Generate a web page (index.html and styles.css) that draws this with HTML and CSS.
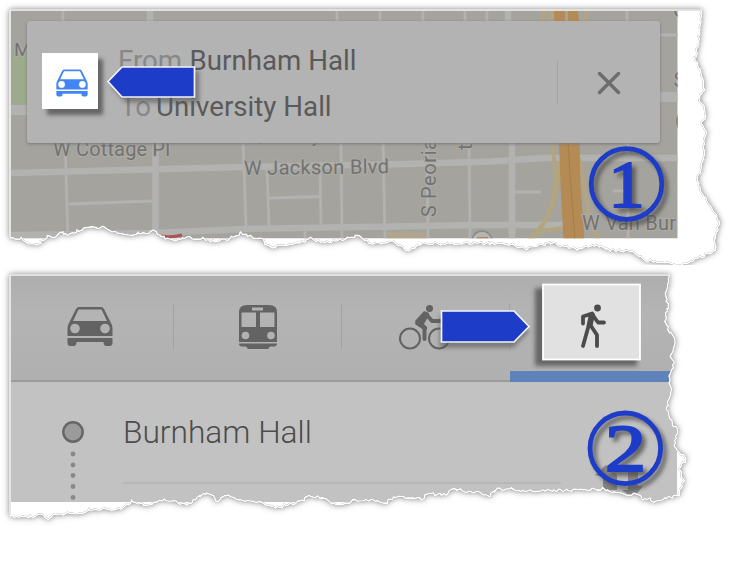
FILE: index.html
```html
<!DOCTYPE html>
<html lang="en">
<head>
<meta charset="utf-8">
<title>Directions guide</title>
<link rel="stylesheet" href="styles.css">
</head>
<body>
<main class="guide">
  <section class="panel panel-map">
    <svg class="backdrop" viewBox="0 0 751 265">
      <defs>
        <clipPath id="clip1"><path data-tear="first"/></clipPath>
        <clipPath id="mapArea"><rect x="11" y="11" width="666.5" height="227.3"/></clipPath>
        <filter id="soft" x="-5%" y="-5%" width="110%" height="115%"><feGaussianBlur stdDeviation="3"/></filter>
      </defs>
      <path class="paper-shadow" data-tear="first"/>
      <path class="paper" data-tear="first"/>
      <g clip-path="url(#clip1)"><g clip-path="url(#mapArea)">
        <rect class="land" width="751" height="265"/>
        <rect class="park" x="10" y="50" width="18" height="54"/>
        <path class="zone" d="M387 232h39v8h-39z"/>
        <g class="road">
          <path d="M63 10v20M65 140l3 100M243 140l3 86M267 168l2 58M320 168l1 58M341 140l1 100M383 140l2 100M427 140l1 100M469 140l1 100M337 10v20M380 10v20M423 10v20M465 10v20M487 10v20M627 10v20M305 231v9M628 143v97M69 204l83-3M269 198l51-1.5M515 192h26M613 191h13M660 35h20"/>
          <path class="major" d="M150 10v20M155.500 140v100M508 10v20M512 140v100M10 173l233-6 147-2.500 100-3L545 158h135M10 235l145-2 90-4 235-4h84"/>
          <path class="wide" d="M10 110h18M658 97h22"/>
        </g>
        <g class="ramp"><path d="M552 140c4 30 5 46-2 70-6 18-16 22-21 30M558 163c0 38-10 61-28 77M579 158c7 24 5 55 19 81M535 232l28-4M544 10l-2 11M552 10l-2 11M587 10l-2 11"/></g>
        <path class="highway" d="M559 140h20.500l1 45 4 55h-21l-3-55zM554 10h11v11h-11zM568 10h10l1 11h-11z"/>
        <path class="median" d="M568 143l3 45 4 52"/>
        <path class="rail" d="M162 236q8 2 20-1"/>
        <circle class="stop" cx="482" cy="241" r="10"/><path class="stop-mark" d="M477 238h11"/>
        <g class="label">
          <text x="14" y="56" font-size="19">M</text>
          <text x="53" y="156" textLength="117">W Cottage Pl</text>
          <text x="244" y="175" textLength="145" transform="rotate(-.7 244 175)">W Jackson Blvd</text>
          <text transform="translate(436 217) rotate(-90)" textLength="78">S Peoria</text>
          <text x="249" y="142" textLength="72">Quincy</text>
          <text transform="translate(472 150) rotate(-90)">t</text>
          <text x="582" y="230" textLength="94">W Van Bur</text>
          <text x="673" y="17">C</text><text x="673.500" y="87">S</text><text x="675" y="129">C</text>
        </g>
      </g></g>
      <path class="paper-edge" data-tear="first"/>
    </svg>

    <div class="route-card">
      <div class="route-mode">
        <svg viewBox="0 0 46 39" class="car car-blue"><use href="#car"/></svg>
      </div>
      <div class="route-lines">
        <div class="line"><span class="muted">From</span><span class="place">Burnham Hall</span></div>
        <div class="line"><span class="muted to">To</span><span class="place">University Hall</span></div>
      </div>
      <div class="route-close"><svg viewBox="0 0 24 24"><path d="M2.500 2.500l19 19M21.500 2.500l-19 19"/></svg></div>
    </div>

    <svg class="overlay" viewBox="0 0 751 265">
      <path class="arrow arrow-left" d="M108 81.500L122 67h72.500v30H122z"/>
      <g class="number">
        <circle cx="626.500" cy="184" r="35.300"/>
        <text x="608.500" y="207" textLength="36" lengthAdjust="spacingAndGlyphs">1</text>
      </g>
    </svg>
  </section>

  <section class="panel panel-modes">
    <svg class="backdrop" viewBox="0 265 751 306">
      <defs><clipPath id="clip2"><path data-tear="second"/></clipPath></defs>
      <path class="paper-shadow" data-tear="second"/>
      <path class="paper" data-tear="second"/>
    </svg>

    <div class="sheet">
      <div class="tabs">
        <div class="tab tab-car"><svg viewBox="0 0 46 39" class="car"><g id="car">
          <path d="M9 2Q10 0 12 0h22q2 0 3 2l7.500 15q1 2 1 4v8H.5v-8q0-2 1-4zM11.500 2.500L6 14h34l-5.500-11.500z" fill-rule="evenodd"/>
          <path d="M.5 31h45v5q0 3-3 3h-3q-3 0-3-4H9.500q0 4-3 4h-3q-3 0-3-3z"/>
          <circle class="lamp" cx="8" cy="21.500" r="4.800"/><circle class="lamp" cx="38" cy="21.500" r="4.800"/></g></svg></div>
        <div class="tab tab-train"><svg viewBox="0 0 40 44" class="train">
          <path fill-rule="evenodd" d="M1 7Q1 0 9 0h22q8 0 8 7v30H1zM14 2.500v3h11v-3zM3.500 7.500V22H18V7.500zM22 7.500V22h14.500V7.500z"/>
          <path d="M1 38.500h38q0 3-3 3h-4l-2 2.500H10l-2-2.500H4q-3 0-3-3z"/>
          <circle class="lamp" cx="7.500" cy="30.500" r="3.800"/><circle class="lamp" cx="33" cy="30.500" r="3.800"/></svg></div>
        <div class="tab tab-bike"><svg viewBox="0 0 50 45" class="bike">
          <circle class="wheel" cx="11" cy="33.500" r="10"/><circle class="wheel" cx="40" cy="33.500" r="10"/>
          <circle cx="30.500" cy="3.500" r="3.500"/>
          <path class="limb" d="M26 9l-8 9 7.500 5v11M27 9l6 7h10" /><path d="M16 16l9-10 5 2-1 4-4 7 3 3v3l-5-2z"/></svg></div>
        <div class="tab tab-walk"></div>
      </div>
      <div class="stops">
        <svg class="origin" viewBox="0 0 26 84"><circle class="pin" cx="13" cy="13" r="9.700"/><g><circle cx="13" cy="35" r="2.400"/><circle cx="13" cy="46" r="2.400"/><circle cx="13" cy="56.500" r="2.400"/><circle cx="13" cy="67.500" r="2.400"/><circle cx="13" cy="78.500" r="2.400"/></g></svg>
        <div class="stop-name"><span>Burnham Hall</span></div>
      </div>
    </div>

    <svg class="overlay" viewBox="0 265 751 306">
      <path class="ghost" clip-path="url(#clip2)" d="M595 475l11-10 11 10v15h-14v-13zM628 469h10v17h5l-10 12-11-8h6z"/>
      <path class="paper-edge" data-tear="second"/>
      <rect class="spot-shadow" x="535" y="288" width="102" height="78"/>
      <path class="arrow arrow-right" d="M441.500 311h72.500l15 15.500L514 342h-72.500z"/>
      <rect class="spot" x="543" y="284.500" width="97" height="75"/>
      <g class="walker">
        <circle cx="597.500" cy="308" r="3.400"/>
        <path d="M592 313.500l-9 3v7M592 314l6 8.500h6M591 314l-3 14-5 18M591 326l6 9v11"/>
        <path class="torso" d="M592 315l-2 10"/>
      </g>
      <g class="number">
        <circle cx="625.300" cy="448.300" r="35.300"/>
        <text x="605" y="471" textLength="41" lengthAdjust="spacingAndGlyphs">2</text>
      </g>
    </svg>
  </section>
</main>
<script src="script.js"></script>
</body>
</html>
```

FILE: styles.css
```css
* { box-sizing: border-box; }
body { margin: 0; background: #fff; font-family: Roboto, "Liberation Sans", sans-serif; overflow: hidden; }
.guide { display: grid; grid-template-rows: 265px 306px; width: 751px; }
.panel { display: grid; position: relative; overflow: hidden; }
.panel > * { grid-area: 1 / 1; }
.backdrop, .overlay { display: block; width: 100%; height: 100%; overflow: hidden; }
.overlay { position: absolute; inset: 0; }

.paper { fill: #fff; }
.paper-shadow { fill: #777; stroke: #777; stroke-width: 1; filter: url(#soft); }
.paper-edge { fill: none; stroke: #fff; stroke-width: 1.6; filter: drop-shadow(0 0 .6px #666); }
.land { fill: #a5a39e; }
.park { fill: #9eaa8d; }
.zone { fill: #b2a58d; }
.road { fill: none; stroke: #b2b2b1; stroke-width: 2.8; }
.road .major { stroke-width: 6.5; }
.road .wide { stroke-width: 10; }
.ramp { fill: none; stroke: #b3a57f; stroke-width: 4; }
.highway { fill: #b58b55; }
.median { fill: none; stroke: #a77f4b; stroke-width: 1.2; }
.rail { fill: none; stroke: #ad5555; stroke-width: 3; }
.stop { fill: #b5b5b3; stroke: #898986; stroke-width: 1.5; }
.stop-mark { stroke: #b7835c; stroke-width: 2; }
.label { font-size: 20px; fill: #737270; paint-order: stroke; stroke: #adaca8; stroke-width: 2px; }

.route-card {
  display: grid; grid-template-columns: 91px 439px 103px;
  width: 633px; height: 122px; margin: 21px 0 0 27px;
  background: #b3b3b3; border-radius: 3px; box-shadow: 0 1px 3px #777;
}
.route-mode {
  display: grid; place-items: center; width: 56px; height: 56px; margin: 32px 0 0 15px;
  background: #fff; box-shadow: 5px 6px 4px #666;
}
.car { width: 46px; height: 39px; fill: #636363; --lamp: #b2b2b2; }
.car-blue { width: 32px; height: 28px; margin: 3px 0 0 4px; fill: #4385f3; --lamp: #fff; }
.lamp { fill: var(--lamp, #b2b2b2); }
.route-lines { display: flex; flex-direction: column; padding-top: 17px; }
.line { display: flex; height: 45.5px; line-height: 46px; font-size: 27.7px; white-space: nowrap; color: #5a5a5a; }
.muted { width: 71.5px; color: #888; }
.to { width: 38px; padding-left: 2px; }
.route-close { display: grid; place-items: center; height: 45px; margin-top: 39px; padding-right: 1px; border-left: 1px solid #a4a4a4; }
.route-close svg { width: 24px; height: 24px; stroke: #6d6d6d; stroke-width: 3.5; stroke-linecap: round; }

.arrow { fill: #1d3cc7; stroke: #f4f4f8; stroke-width: 1.7; }
.arrow-left { filter: drop-shadow(4px 5px 2px #5559); }
.arrow-right { filter: drop-shadow(-1px 5px 2px #5559); }
.number { filter: drop-shadow(4px 4px 2px #444b); font: 68px "Liberation Serif", serif; fill: #1d3cc7; }
.number text { stroke: #1d3cc7; stroke-width: 2.2; }
.number circle { fill: none; stroke: #1d3cc7; stroke-width: 4.8; }

.sheet { width: 666px; height: 226px; margin: 11px 0 0 11px; background: #c2c2c2; clip-path: url(#sheetClip); }
.tabs { display: grid; grid-template-columns: 163px 168px 168px 167px; height: 106px; background: linear-gradient(#aeaeae, #b4b4b4 35%, #b0b0b0); border-bottom: 2px solid #9b9b9b; }
.tab { position: relative; padding-top: 29px; }
.tab:not(.tab-walk) { background: linear-gradient(#a3a3a3, #a3a3a3) right 28px / 1px 45px no-repeat; }
.tab svg { display: block; }
.tab-car svg { margin: 2px 0 0 56px; }
.tab-train svg { width: 40px; height: 44px; margin-left: 64px; fill: #636363; }
.tab-bike svg { width: 50px; height: 45px; margin-left: 57px; fill: #636363; }
.wheel { fill: none; stroke: #636363; stroke-width: 2; }
.limb { fill: none; stroke: #636363; stroke-width: 4; stroke-linejoin: round; stroke-linecap: round; }
.tab-walk { height: 106px; border-bottom: 11px solid #6082bb; }
.stops { display: grid; grid-template-columns: 49px 73px 1fr; }
.origin { grid-column: 1 / 3; width: 26px; height: 84px; margin: 37px 0 0 49px; fill: #898989; }
.pin { fill: #9b9b9b; stroke: #666; stroke-width: 2.4; }
.stop-name { grid-column: 3; margin-left: -10px; width: 438px; height: 102px; border-bottom: 2px solid #b7b7b7; font-size: 31.7px; font-weight: 300; line-height: 101px; color: #4c4c4c; }
.ghost { fill: #858585; filter: blur(.5px); }
.spot { fill: #e1e1e1; stroke: #fff; stroke-width: 1.8; }
.spot-shadow { fill: #666; filter: blur(2px); }
.walker { fill: #4b4b4b; }
.walker path { fill: none; stroke: #4b4b4b; stroke-width: 3.8; stroke-linejoin: round; stroke-linecap: round; }
.walker .torso { stroke-width: 5.5; }
```

FILE: script.js
```js
// Control points of each torn sheet; "steps" after the square corners are roughened.
const tears = {
  first: [[10,238,702,10],
    [702,10,700,25,698,45,695,60,701,72,704,90,699,98,706,113,702,125,706,133,704,145,705,155,697,178,700,190,706,200,720,222,715,235,716,250,710,253,700,257,686,265,676,264,657,261,646,261,633,252,625,251,610,250,592,245,577,250,551,243,528,249,514,245,495,244,463,243,440,244,423,243,408,251,393,242,373,244,356,236,340,240,322,243,311,238,300,243,280,245,272,249,262,240,250,237,240,233,228,239,215,242,202,239,190,238,172,240,165,238,154,230,148,233,135,234,118,234,105,228,93,227,80,230,68,236,60,232,53,238,48,236,40,243,29,244,22,239,10,238]],
  second: [[10,516,670,275],
    [670,275,665,295,668,305,665,320,668,330,675,338,673,350,670,357,675,362,669,377,671,390,669,400,667,408,672,422,677,430,674,447,686,459,679,469,684,481,679,490,679,496,665,498,656,502,650,499,643,500,638,495,625,494,612,491,603,489,573,490,547,491,523,491,517,492,513,489,497,489,488,497,480,493,473,492,453,489,447,495,428,494,422,499,410,497,393,497,387,503,373,500,353,501,342,506,330,502,322,497,308,497,295,503,275,508,260,502,245,501,233,497,227,495,218,501,207,493,197,498,187,504,162,500,153,504,140,505,132,501,123,508,90,510,75,514,58,514,47,519,42,515,27,517,17,518,10,516]]
};

function outline([, pts], top) {
  let seed = 7, d = `M10 ${top}L${pts[0]} ${pts[1]}`;
  const noise = () => ((seed = (seed * 16807) % 2147483647) / 2147483647 - .5) * 3;
  for (let i = 2; i < pts.length; i += 2) {
    const [x0, y0, x1, y1] = pts.slice(i - 2, i + 2);
    const n = Math.max(1, Math.round(Math.hypot(x1 - x0, y1 - y0) / 2.3));
    for (let k = 1; k <= n; k++) {
      const t = k / n, last = i === pts.length - 2 && k === n;
      const x = x0 + (x1 - x0) * t + (last ? 0 : noise() * .7);
      const y = y0 + (y1 - y0) * t + (last ? 0 : noise());
      d += `L${x.toFixed(1)} ${y.toFixed(1)}`;
    }
  }
  return d + "Z";
}

const paths = { first: outline(tears.first, 10), second: outline(tears.second, 275) };
document.querySelectorAll("[data-tear]").forEach(p => p.setAttribute("d", paths[p.dataset.tear]));

// The sheet is an HTML box, so its clip is the same outline moved to the box's origin.
const sheetPath = document.createElementNS("http://www.w3.org/2000/svg", "clipPath");
sheetPath.id = "sheetClip";
sheetPath.innerHTML = `<path transform="translate(-11 -276)" d="${paths.second}"/>`;
document.querySelector(".panel-modes defs").append(sheetPath);
```
